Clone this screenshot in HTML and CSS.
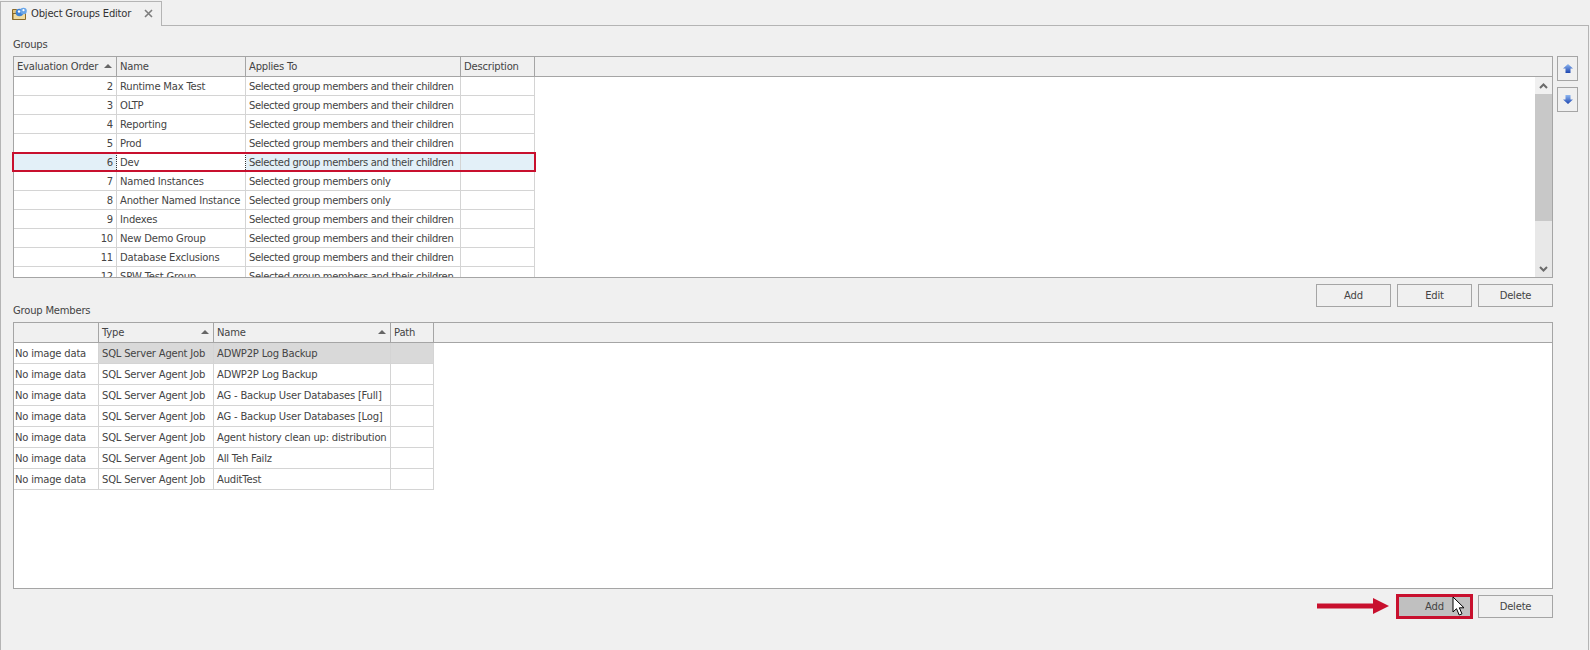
FILE: index.html
```html
<!DOCTYPE html>
<html lang="en">
<head>
<meta charset="utf-8">
<title>Object Groups Editor</title>
<link rel="stylesheet" href="styles.css">
</head>
<body>
<div class="tabstrip">
  <div class="tab">
    <svg class="tab-icon" width="15" height="14" viewBox="0 0 15 14"><path d="M0.500 2.500h4l1 1h6v9h-11z" fill="#e3c47c" stroke="#8a6a2a"/><path d="M1 12.500h12.500v-6h-12.500z" fill="#f1dca0" stroke="#8a6a2a"/><circle cx="7.500" cy="5.500" r="3.800" fill="#3f82d4"/><circle cx="11.500" cy="4" r="3.300" fill="#6aa6e8"/><circle cx="7" cy="4.500" r="1.200" fill="#fff"/><circle cx="11.500" cy="3.200" r="1.100" fill="#fff"/></svg>
    <span class="tab-title">Object Groups Editor</span>
    <svg class="tab-close" width="9" height="9" viewBox="0 0 9 9"><path d="M1 1l7 7M8 1l-7 7" stroke="#7d7d7d" stroke-width="1.600" fill="none"/></svg>
  </div>
  <div class="tab-rest"></div>
</div>
<main class="panel">
  <div class="label label-groups">Groups</div>
  <div class="row-with-side">
    <div class="grid grid-groups">
      <div class="head">
        <div class="hc c1 sort">Evaluation Order<i class="tri"></i></div>
        <div class="hc c2">Name</div>
        <div class="hc c3">Applies To</div>
        <div class="hc c4">Description</div>
      </div>
      <div class="body">
        <div class="rows">
          <div class="r"><div class="c c1 num">2</div><div class="c c2">Runtime Max Test</div><div class="c c3">Selected group members and their children</div><div class="c c4"></div></div>
          <div class="r"><div class="c c1 num">3</div><div class="c c2">OLTP</div><div class="c c3">Selected group members and their children</div><div class="c c4"></div></div>
          <div class="r"><div class="c c1 num">4</div><div class="c c2">Reporting</div><div class="c c3">Selected group members and their children</div><div class="c c4"></div></div>
          <div class="r"><div class="c c1 num">5</div><div class="c c2">Prod</div><div class="c c3">Selected group members and their children</div><div class="c c4"></div></div>
          <div class="r sel"><div class="c c1 num before-focus">6</div><div class="c c2 focus">Dev</div><div class="c c3">Selected group members and their children</div><div class="c c4"></div></div>
          <div class="r"><div class="c c1 num">7</div><div class="c c2">Named Instances</div><div class="c c3">Selected group members only</div><div class="c c4"></div></div>
          <div class="r"><div class="c c1 num">8</div><div class="c c2">Another Named Instance</div><div class="c c3">Selected group members only</div><div class="c c4"></div></div>
          <div class="r"><div class="c c1 num">9</div><div class="c c2">Indexes</div><div class="c c3">Selected group members and their children</div><div class="c c4"></div></div>
          <div class="r"><div class="c c1 num">10</div><div class="c c2">New Demo Group</div><div class="c c3">Selected group members and their children</div><div class="c c4"></div></div>
          <div class="r"><div class="c c1 num">11</div><div class="c c2">Database Exclusions</div><div class="c c3">Selected group members and their children</div><div class="c c4"></div></div>
          <div class="r"><div class="c c1 num">12</div><div class="c c2">SPW Test Group</div><div class="c c3">Selected group members and their children</div><div class="c c4"></div></div>
        </div>
        <div class="scrollbar">
          <div class="sb-btn"><svg width="9" height="6" viewBox="0 0 9 6"><path d="M1 5l3.500-3.500 3.500 3.500" fill="none" stroke="#6b6b6b" stroke-width="2"/></svg></div>
          <div class="sb-thumb"></div>
          <div class="sb-track"></div>
          <div class="sb-btn"><svg width="9" height="6" viewBox="0 0 9 6"><path d="M1 1l3.500 3.500 3.500-3.500" fill="none" stroke="#6b6b6b" stroke-width="2"/></svg></div>
        </div>
      </div>
      <div class="row-mark"></div>
    </div>
    <div class="side">
      <button class="side-btn"><svg width="10" height="9" viewBox="0 0 10 9"><defs><linearGradient id="u" x1="0" y1="0" x2="0" y2="1"><stop offset="0" stop-color="#8fb8f2"/><stop offset="1" stop-color="#1c45b0"/></linearGradient></defs><path d="M5 0l5 4.500h-2.500v4.500h-5v-4.500h-2.500z" fill="url(#u)"/></svg></button>
      <button class="side-btn"><svg width="10" height="9" viewBox="0 0 10 9"><defs><linearGradient id="d" x1="0" y1="0" x2="0" y2="1"><stop offset="0" stop-color="#8fb8f2"/><stop offset="1" stop-color="#1c45b0"/></linearGradient></defs><path d="M5 9l5-4.500h-2.500v-4.500h-5v4.500h-2.500z" fill="url(#d)"/></svg></button>
    </div>
  </div>
  <div class="actions">
    <button class="btn">Add</button>
    <button class="btn">Edit</button>
    <button class="btn">Delete</button>
  </div>
  <div class="label label-members">Group Members</div>
  <div class="grid grid-members">
    <div class="head">
      <div class="hc m1"></div>
      <div class="hc m2 sort">Type<i class="tri"></i></div>
      <div class="hc m3 sort">Name<i class="tri"></i></div>
      <div class="hc m4">Path</div>
    </div>
    <div class="body">
      <div class="rows">
        <div class="r hl"><div class="c m1">No image data</div><div class="c m2">SQL Server Agent Job</div><div class="c m3">ADWP2P Log Backup</div><div class="c m4"></div></div>
        <div class="r"><div class="c m1">No image data</div><div class="c m2">SQL Server Agent Job</div><div class="c m3">ADWP2P Log Backup</div><div class="c m4"></div></div>
        <div class="r"><div class="c m1">No image data</div><div class="c m2">SQL Server Agent Job</div><div class="c m3">AG - Backup User Databases [Full]</div><div class="c m4"></div></div>
        <div class="r"><div class="c m1">No image data</div><div class="c m2">SQL Server Agent Job</div><div class="c m3">AG - Backup User Databases [Log]</div><div class="c m4"></div></div>
        <div class="r"><div class="c m1">No image data</div><div class="c m2">SQL Server Agent Job</div><div class="c m3">Agent history clean up: distribution</div><div class="c m4"></div></div>
        <div class="r"><div class="c m1">No image data</div><div class="c m2">SQL Server Agent Job</div><div class="c m3">All Teh Failz</div><div class="c m4"></div></div>
        <div class="r"><div class="c m1">No image data</div><div class="c m2">SQL Server Agent Job</div><div class="c m3">AuditTest</div><div class="c m4"></div></div>
      </div>
    </div>
  </div>
  <div class="actions actions-bottom">
    <svg class="callout" width="72" height="16" viewBox="0 0 72 16"><path d="M0 5.500h56v-5.500l16 8-16 8v-5.500h-56z" fill="#c8102e"/></svg>
    <button class="btn btn-marked">Add</button>
    <button class="btn">Delete</button>
    <svg class="pointer" width="13" height="21" viewBox="0 0 13 21"><path d="M1 1v15l3.500-3.300 2.700 6.300 2.800-1.200-2.700-6h4.700z" fill="#fff" stroke="#000" stroke-width="1"/></svg>
  </div>
</main>
</body>
</html>
```
FILE: styles.css
```css
* { box-sizing: border-box; }
html, body { margin: 0; height: 650px; overflow: hidden; }
body {
  background: #f0f0f0;
  font-family: "DejaVu Sans", sans-serif;
  font-size: 10px;
  letter-spacing: -0.2px;
  color: #444;
}
.tabstrip { display: flex; height: 26px; width: 1589px; padding-top: 1px; }
.tab {
  width: 162px;
  height: 25px;
  background: #f0f0f0;
  border: 1px solid #b4b4b4;
  border-bottom: 0;
  display: flex;
  align-items: center;
  padding: 0 0 1px 11px;
  position: relative;
}
.tab-icon { flex: none; margin-right: 4px; }
.tab-title { color: #333; white-space: nowrap; }
.tab-close { margin-left: auto; margin-right: 8px; }
.tab-rest { flex: 1; border-bottom: 1px solid #b4b4b4; }
.panel {
  width: 1589px;
  height: 624px;
  border-left: 1px solid #b4b4b4;
  border-right: 1px solid #b4b4b4;
  padding-left: 12px;
  position: relative;
}
.label { color: #444; line-height: 14px; }
.label-groups { padding-top: 12px; height: 30px; }
.label-members { height: 15px; line-height: 7px; }
.row-with-side { display: flex; gap: 4px; }
.grid {
  width: 1540px;
  border: 1px solid #a5a5a5;
  background: #fff;
  position: relative;
  display: flex;
  flex-direction: column;
}
.grid-groups { height: 222px; }
.grid-members { height: 267px; }
.head {
  display: flex;
  height: 20px;
  flex: none;
  background: #f0f0f0;
  border-bottom: 1px solid #a5a5a5;
}
.hc {
  border-right: 1px solid #a5a5a5;
  padding-left: 3px;
  line-height: 20px;
  white-space: nowrap;
  position: relative;
}
.tri {
  position: absolute;
  right: 4px;
  top: 7px;
  border-left: 4px solid transparent;
  border-right: 4px solid transparent;
  border-bottom: 4px solid #666;
}
.body { flex: 1; display: flex; overflow: hidden; min-height: 0; }
.rows { flex: 1; overflow: hidden; }
.r { display: flex; height: 19px; }
.grid-members .r { height: 21px; }
.c {
  border-right: 1px solid #d4d4d4;
  border-bottom: 1px solid #d4d4d4;
  padding: 1px 0 0 3px;
  line-height: 17px;
  white-space: nowrap;
  overflow: hidden;
}
.grid-members .c { line-height: 19px; }
.num { text-align: right; padding-right: 3px; }
.c1 { width: 103px; }
.c2 { width: 129px; }
.c3 { width: 215px; }
.c.c3 { letter-spacing: -0.33px; }
.c4 { width: 74px; }
.m1 { width: 85px; padding-left: 1px; }
.grid-members .m1 { padding-left: 1px; }
.m2 { width: 115px; }
.m3 { width: 177px; }
.m4 { width: 43px; }
.sel .c { background: #e3f0f8; }
.sel .focus { background: #fff; border-right: 1px dotted #333; }
.sel .before-focus { border-right: 1px dotted #333; }
.hl .c { background: #d9d9d9; }
.hl .m1 { background: #fff; }
.scrollbar { width: 17px; flex: none; display: flex; flex-direction: column; background: #e8e8e8; }
.sb-btn { height: 17px; display: flex; align-items: center; justify-content: center; background: #f0f0f0; }
.sb-thumb { height: 127px; background: #c8c8c8; }
.sb-track { flex: 1; background: #e8e8e8; }
.scrollbar .sb-btn:last-child { background: #e8e8e8; }
.row-mark {
  position: absolute;
  left: -2px;
  top: 95px;
  width: 524px;
  height: 20px;
  border: 2px solid #c8102e;
  pointer-events: none;
}
.side { display: flex; flex-direction: column; gap: 6px; }
.side-btn {
  width: 21px;
  height: 25px;
  padding: 0;
  background: #f0f0f0;
  border: 1px solid #a5a5a5;
  display: flex;
  align-items: center;
  justify-content: center;
}
.actions {
  width: 1540px;
  display: flex;
  justify-content: flex-end;
  gap: 6px;
  margin-top: 6px;
  position: relative;
}
.btn {
  width: 75px;
  height: 23px;
  padding: 0;
  background: #f0f0f0;
  border: 1px solid #a5a5a5;
  color: #444;
  font: inherit;
  letter-spacing: inherit;
}
.btn-marked {
  background: #c0c0c0;
  border: 2px solid #c8102e;
  box-shadow: 0 0 0 1px #c8102e;
}
.callout { position: absolute; left: 1304px; top: 3px; }
.pointer { position: absolute; left: 1439px; top: 1px; }
```
